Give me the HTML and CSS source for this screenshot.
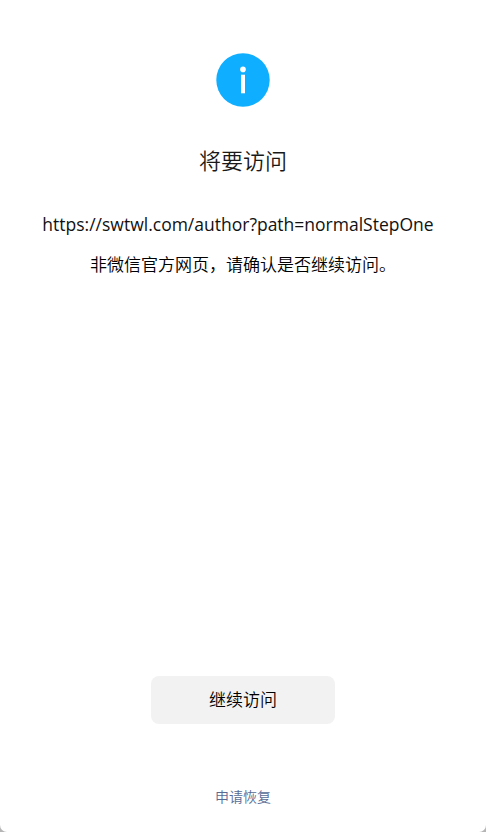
FILE: index.html
```
<!DOCTYPE html>
<html lang="zh-CN">
<head>
	<meta charset="UTF-8">
	<title>将要访问</title>
	<link rel="stylesheet" href="styles.css">
</head>
<body>

	<div class="page">
		<div class="icon">
			<svg width="54" height="54" viewBox="0 0 54 54">
				<circle cx="27" cy="27" r="26.7" fill="#10aeff"/>
				<circle cx="27" cy="16.4" r="2.8" fill="#fff"/>
				<path d="M25 21.7h4v18.6h-4z" fill="#fff"/>
			</svg>
		</div>
		<h2 class="title">将要访问</h2>
		<p class="url">https://swtwl.com/author?path=normalStepOne</p>
		<p class="desc">非微信官方网页，请确认是否继续访问。</p>
		<div class="footer">
			<a class="btn" href="#">继续访问</a>
			<a class="link" href="#">申请恢复</a>
		</div>
	</div>

</body>
</html>
```

FILE: styles.css
```
*{
	margin: 0;
	padding: 0;
	box-sizing: border-box;
}

html{
	background: #b5b5b5;
}

body{
	font-family: "Noto Sans", "Noto Sans CJK SC", sans-serif;
	font-weight: 350;
	color: #000;
}

.page{
	display: flex;
	flex-direction: column;
	align-items: center;
	height: 832px;
	padding-top: 53px;
	background: #fff;
	border-radius: 0 0 7px 7px;
}

.icon{
	height: 54px;
}

.title{
	margin-top: 37px;
	font-size: 22px;
	font-weight: 350;
	line-height: 32px;
	color: #191919;
}

.url{
	margin-top: 35px;
	padding-right: 10px;
	font-family: "Open Sans", "Noto Sans CJK SC", sans-serif;
	font-size: 17.5px;
	font-weight: 400;
	line-height: 27px;
	white-space: nowrap;
	color: #111;
}

.desc{
	margin-top: 13px;
	font-size: 17px;
	line-height: 27px;
}

.footer{
	display: flex;
	flex-direction: column;
	align-items: center;
	margin-top: auto;
	padding-bottom: 25px;
}

.btn{
	width: 184px;
	height: 48px;
	border-radius: 8px;
	background: #f2f2f2;
	font-size: 17px;
	line-height: 48px;
	text-align: center;
	text-decoration: none;
	color: #000;
}

.link{
	margin-top: 63px;
	font-size: 14px;
	line-height: 20px;
	text-decoration: none;
	color: #576b95;
}
```
